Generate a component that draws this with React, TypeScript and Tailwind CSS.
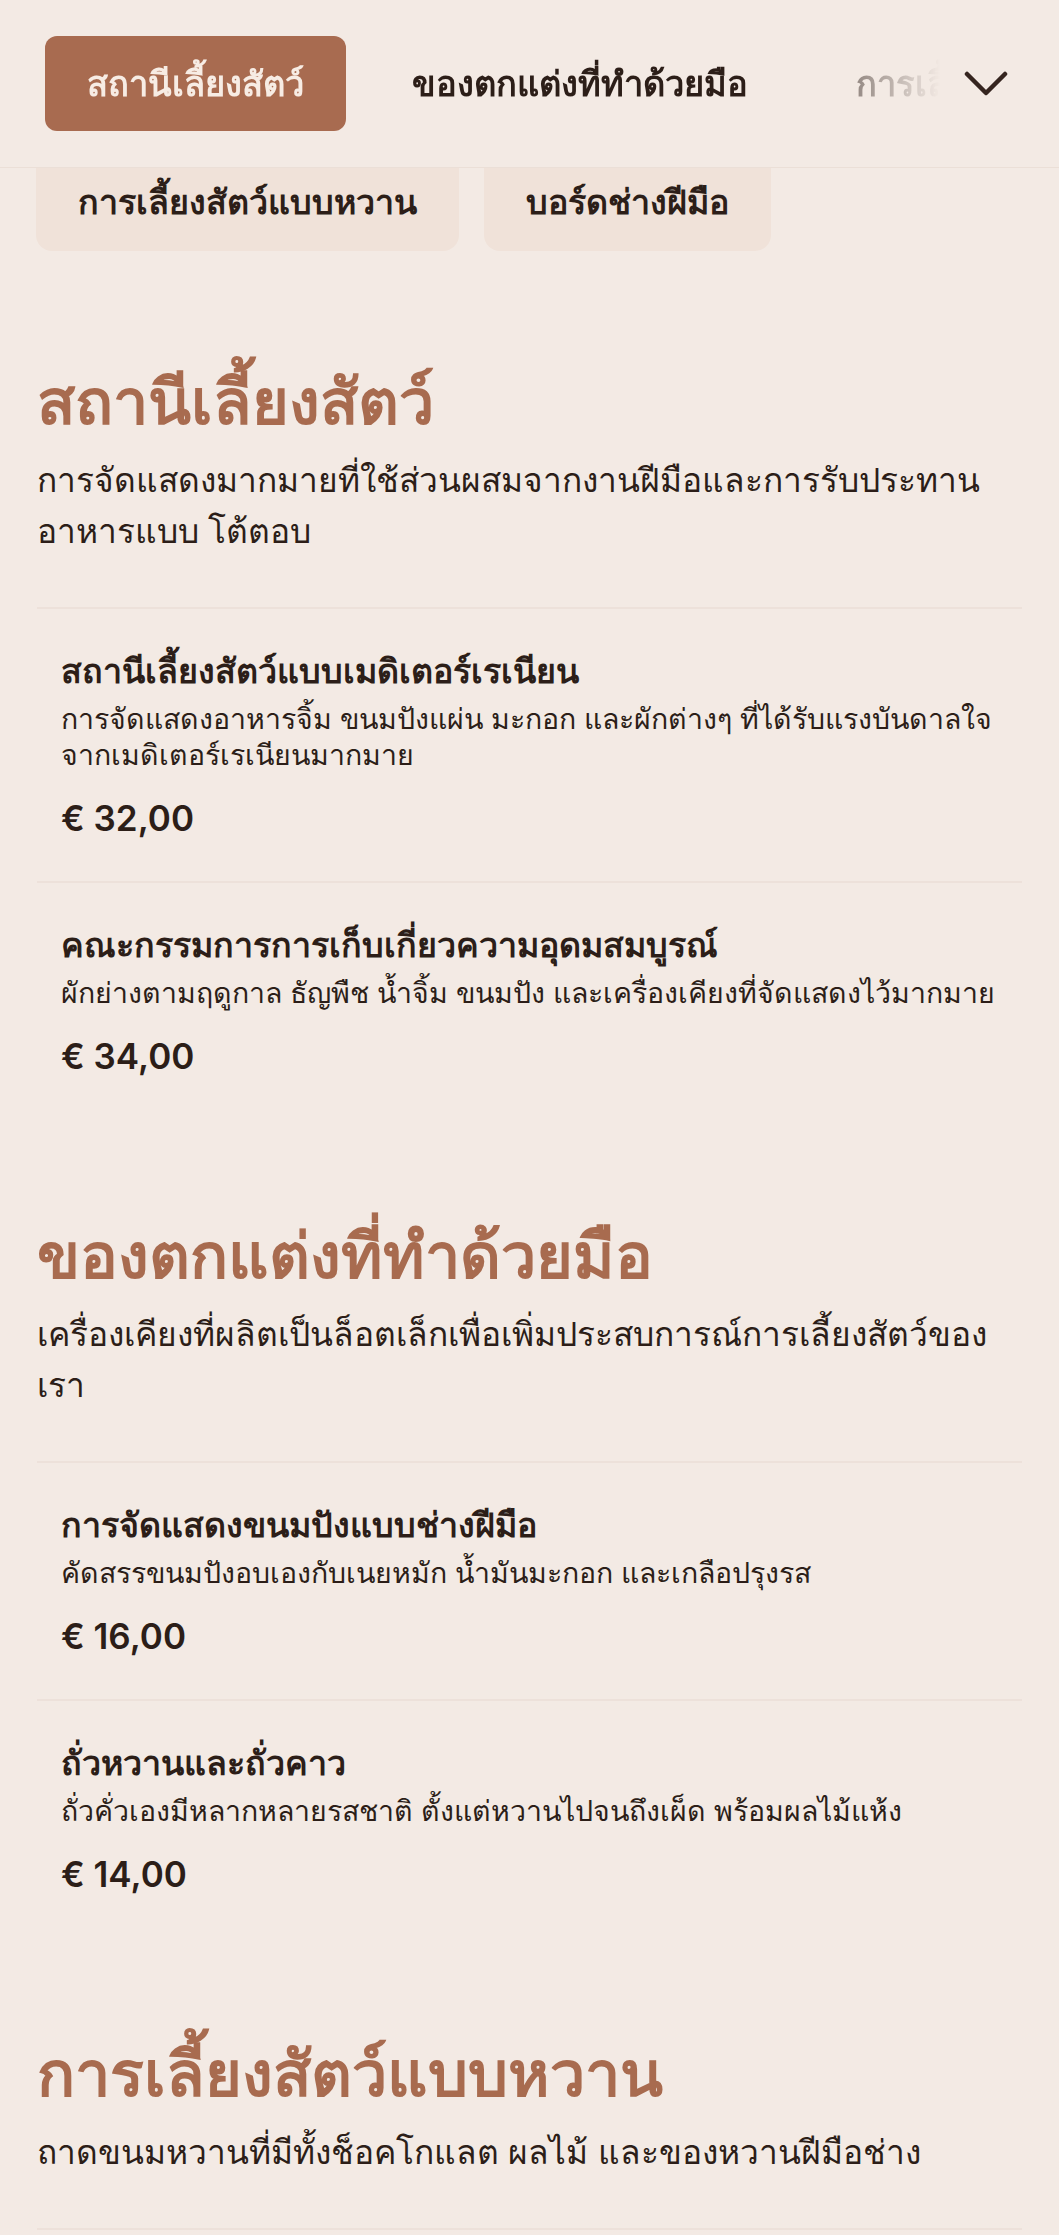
import React from "react";

const navItems = ["สถานีเลี้ยงสัตว์", "ของตกแต่งที่ทำด้วยมือ", "การเลี้ยงสัตว์แบบหวาน", "บอร์ดช่างฝีมือ"];

type Item = { title: string; desc: string; price: string };
type Section = { title: string; desc: string; items: Item[] };

const sections: Section[] = [
  {
    title: "สถานีเลี้ยงสัตว์",
    desc: "การจัดแสดงมากมายที่ใช้ส่วนผสมจากงานฝีมือและการรับประทานอาหารแบบ โต้ตอบ",
    items: [
      {
        title: "สถานีเลี้ยงสัตว์แบบเมดิเตอร์เรเนียน",
        desc: "การจัดแสดงอาหารจิ้ม ขนมปังแผ่น มะกอก และผักต่างๆ ที่ได้รับแรงบันดาลใจจากเมดิเตอร์เรเนียนมากมาย",
        price: "€ 32,00",
      },
      {
        title: "คณะกรรมการการเก็บเกี่ยวความอุดมสมบูรณ์",
        desc: "ผักย่างตามฤดูกาล ธัญพืช น้ำจิ้ม ขนมปัง และเครื่องเคียงที่จัดแสดงไว้มากมาย",
        price: "€ 34,00",
      },
    ],
  },
  {
    title: "ของตกแต่งที่ทำด้วยมือ",
    desc: "เครื่องเคียงที่ผลิตเป็นล็อตเล็กเพื่อเพิ่มประสบการณ์การเลี้ยงสัตว์ของเรา",
    items: [
      {
        title: "การจัดแสดงขนมปังแบบช่างฝีมือ",
        desc: "คัดสรรขนมปังอบเองกับเนยหมัก น้ำมันมะกอก และเกลือปรุงรส",
        price: "€ 16,00",
      },
      {
        title: "ถั่วหวานและถั่วคาว",
        desc: "ถั่วคั่วเองมีหลากหลายรสชาติ ตั้งแต่หวานไปจนถึงเผ็ด พร้อมผลไม้แห้ง",
        price: "€ 14,00",
      },
    ],
  },
  {
    title: "การเลี้ยงสัตว์แบบหวาน",
    desc: "ถาดขนมหวานที่มีทั้งช็อคโกแลต ผลไม้ และของหวานฝีมือช่าง",
    items: [],
  },
];

export default function App() {
  return (
    <div
      className="min-h-screen bg-[#f3eae4] text-[#2c1e18] overflow-hidden"
      style={{ fontFamily: 'Inter, "Noto Sans", sans-serif' }}
    >
      {/* Header */}
      <header className="relative z-10 h-[168px] bg-[#f3eae4] border-b border-[#ebdfd7] flex items-center pl-[45px] pr-[51px]">
        <nav className="flex-1 min-w-0 overflow-hidden [mask-image:linear-gradient(to_right,black_80%,transparent_100%)]">
          <div className="flex items-center gap-[24px] whitespace-nowrap">
            {navItems.map((n, i) => (
              <div
                key={n}
                className={
                  i === 0
                    ? "shrink-0 h-[95px] px-[42px] flex items-center rounded-[12px] bg-[#a86b50] text-[#f7ece4] text-[34.5px] font-bold"
                    : "shrink-0 h-[95px] px-[42px] flex items-center rounded-[12px] text-[#2c1e18] text-[34.5px] font-bold"
                }
              >
                {n}
              </div>
            ))}
          </div>
        </nav>
        <div className="shrink-0 ml-[24px] w-[44px] flex items-center justify-center">
          <svg width="44" height="26" viewBox="0 0 44 26" fill="none">
            <polyline points="3,3 22,22 41,3" stroke="#35251f" strokeWidth="4.5" strokeLinecap="round" strokeLinejoin="round" />
          </svg>
        </div>
      </header>

      {/* Sub categories (partially under header) */}
      <div className="-mt-[16px] px-[36px] flex gap-[25px]">
        <div className="h-[99px] px-[42px] flex items-center rounded-[16px] bg-[#f0e2d9] text-[34px] font-bold">
          การเลี้ยงสัตว์แบบหวาน
        </div>
        <div className="h-[99px] px-[42px] flex items-center rounded-[16px] bg-[#f0e2d9] text-[34px] font-bold">
          บอร์ดช่างฝีมือ
        </div>
      </div>

      <main className="px-[37px] pt-[114px]">
        {sections.map((s, si) => (
          <section key={s.title} className={si === 0 ? "" : "mt-[100px]"}>
            <h2 className="text-[63px] leading-[72px] font-bold text-[#a86b4f] mb-[18px]">{s.title}</h2>
            <p className="text-[33.5px] leading-[51px] mb-[50px]">{s.desc}</p>
            <div className="border-t-2 border-[#ede1da]">
              {s.items.map((it, ii) => (
                <div
                  key={it.title}
                  className={
                    ii === 0
                      ? "px-[24px] pt-[42px] pb-[43px]"
                      : "border-t-2 border-[#ede1da] px-[24px] pt-[42px] pb-[43px]"
                  }
                >
                  <h3 className="text-[34px] leading-[40px] font-bold">{it.title}</h3>
                  <p className="mt-[10px] text-[28.5px] leading-[36px]">{it.desc}</p>
                  <div className="mt-[25px] text-[35px] leading-[40px] font-semibold">{it.price}</div>
                </div>
              ))}
            </div>
          </section>
        ))}
      </main>
    </div>
  );
}
